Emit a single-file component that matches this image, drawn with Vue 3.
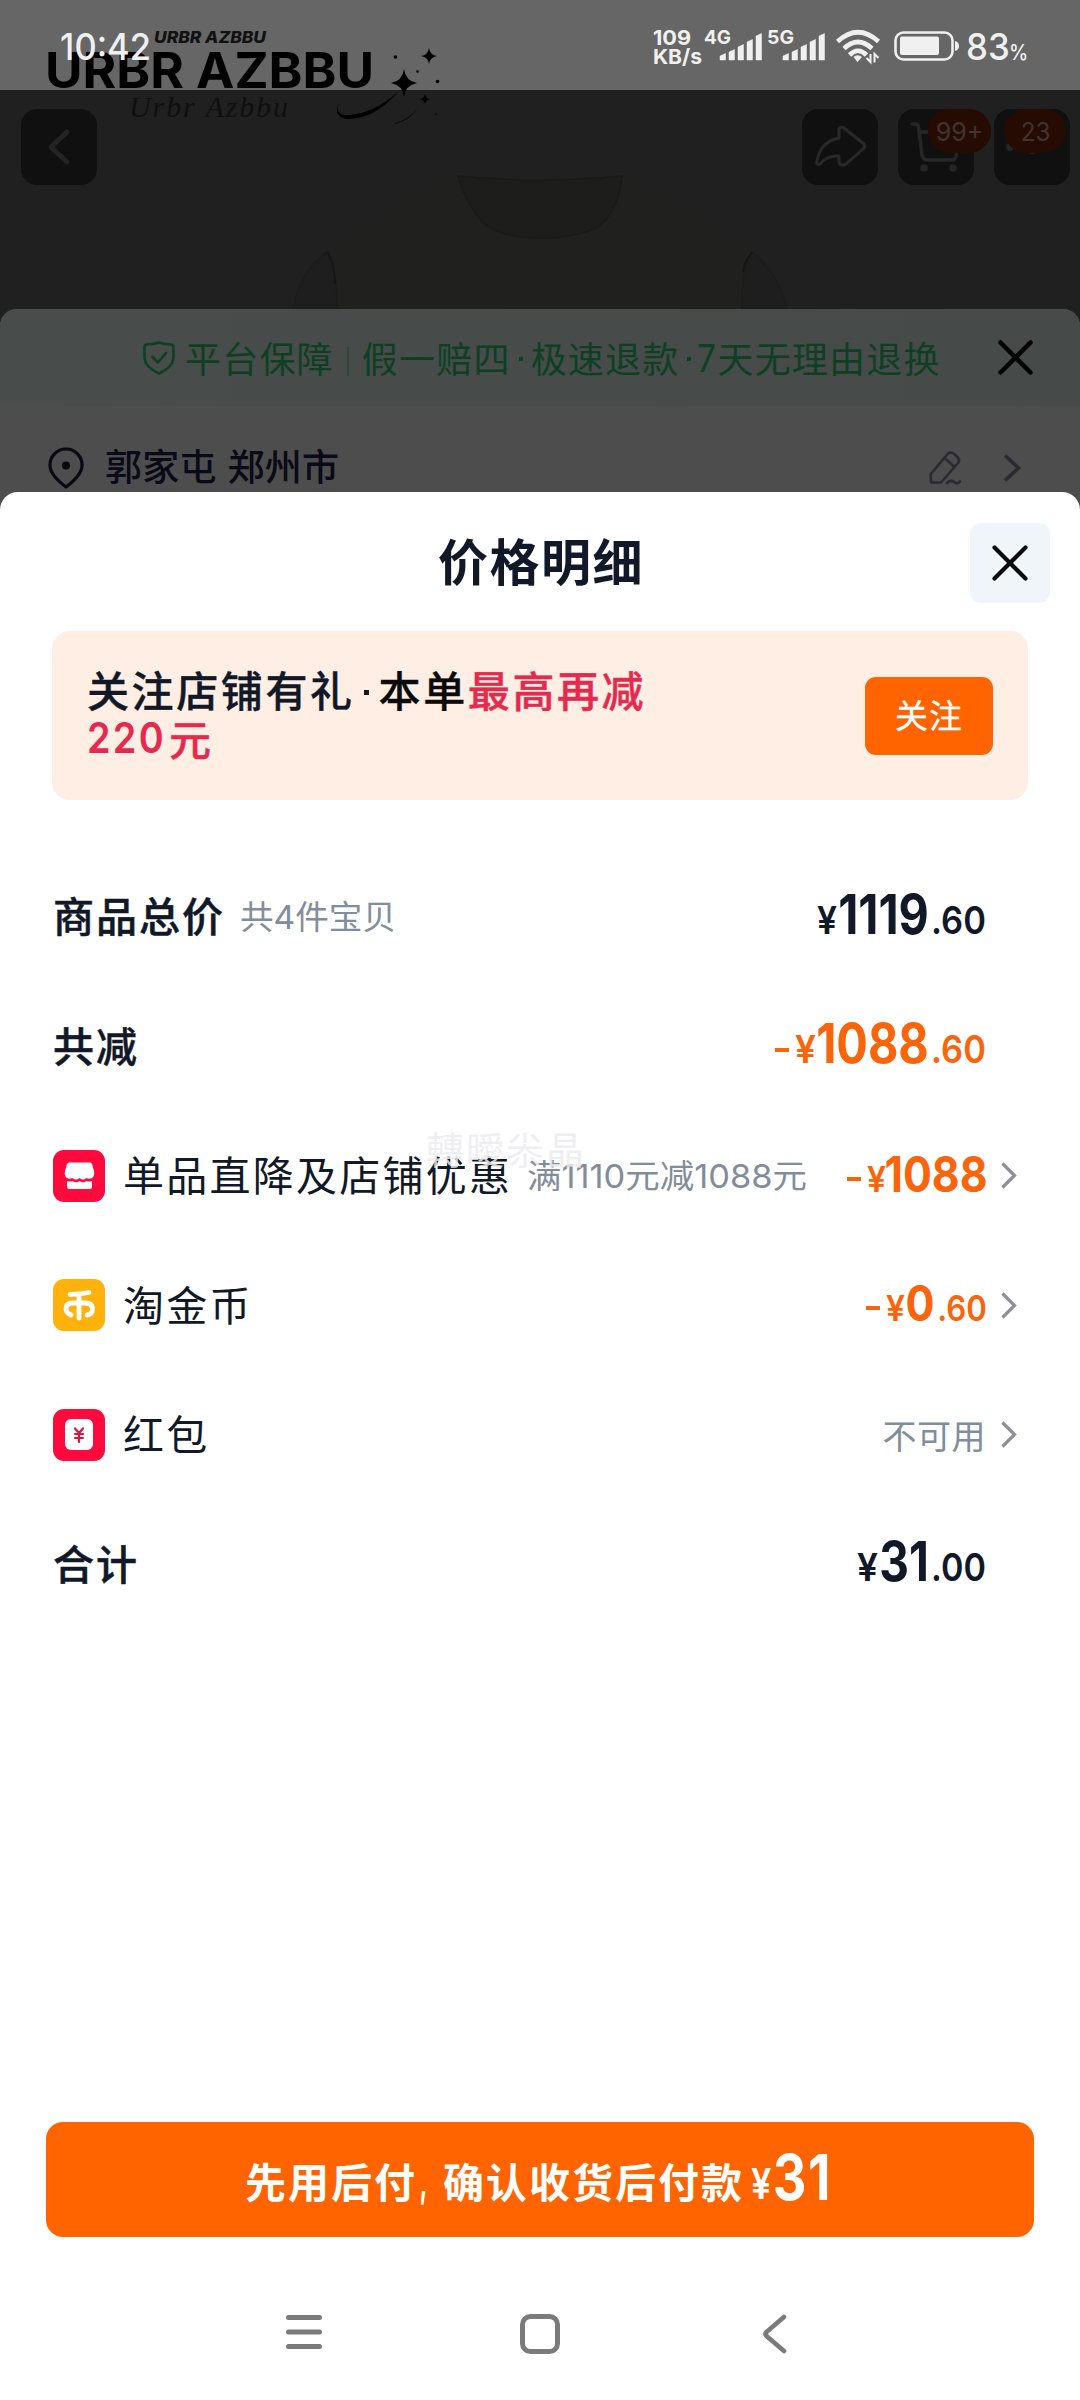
<script setup>
import { h } from 'vue'

// One run of Latin text or digits whose box is exactly as wide and as tall as its capitals.
const Run = (p) => {
  const b = p.b ?? p.h * 0.07
  return h('svg', { width: p.w, height: p.h, class: 'run' }, [
    h('text', {
      x: -b,
      y: p.h,
      'font-size': p.h / 0.727,
      'font-weight': p.fw || 700,
      'font-family': 'Inter, "Noto Sans CJK SC", sans-serif',
      fill: 'currentColor',
      textLength: p.w + 2 * b,
      lengthAdjust: 'spacingAndGlyphs',
    }, p.t),
  ])
}
Run.props = ['t', 'w', 'h', 'fw', 'b']

const rows = [
  { label: '商品总价', bold: true, sub: { t: '共4件宝贝', w: 154 }, tone: 'dark', yen: 18, int: ['1119', 85, 40], gap: 5, dec: ['.60', 51, 28] },
  { label: '共减', bold: true, tone: 'hot', minus: true, yen: 19, int: ['1088', 107, 40], gap: 4, dec: ['.60', 51, 28] },
  { label: '单品直降及店铺优惠', icon: 'shop', sub: { t: '满1110元减1088元', w: 278 }, tone: 'hot', minus: true, yen: 17, yh: 26, int: ['1088', 98, 36], gap: 2, arrow: true },
  { label: '淘金币', icon: 'coin', tone: 'hot', minus: true, yen: 17, yh: 26, int: ['0', 24, 36], gap: 4, dec: ['.60', 46, 26], arrow: true },
  { label: '红包', icon: 'packet', note: '不可用', arrow: true },
  { label: '合计', bold: true, tone: 'dark', yen: 19, int: ['31', 44, 40], gap: 5, dec: ['.00', 51, 28] },
]
const bars = [6, 10, 15, 20, 26]
</script>

<template>
  <div class="screen">
    <section class="hero">
      <svg class="art" width="1080" height="309" viewBox="0 0 1080 309">
        <rect width="1080" height="309" fill="#202020" />
        <rect width="1080" height="90" fill="#666" />
        <path d="M458 176Q400 205 328 252Q338 280 337 309H742Q741 270 752 252Q690 212 622 176Z" fill="#20201f" />
        <g fill="#1d1d1c" stroke="#1a1a1a" stroke-width="1.500">
          <path d="M458 176Q540 184 622 176Q620 206 601 225Q580 238 540 238Q500 238 482 222Q464 200 458 176Z" />
          <path d="M293 309Q300 270 328 252Q338 280 337 309Z" fill="#1e1e1e" stroke="#1c1c1c" />
          <path d="M787 309Q778 272 752 252Q741 270 742 309Z" fill="#1e1e1e" stroke="#1c1c1c" />
          <path d="M328 252L331 260Q335 270 335 284M752 252Q743 264 743 272" fill="none" stroke="#151515" stroke-width="1.600" />
        </g>
        <g fill="#000">
          <text x="154" y="43" font-family="Inter" font-size="16.5" font-weight="800" font-style="italic" textLength="112" lengthAdjust="spacingAndGlyphs" fill="#111">URBR AZBBU</text>
          <text x="45" y="88" font-family="Inter" font-size="49.5" font-weight="700" textLength="329" lengthAdjust="spacingAndGlyphs">URBR AZBBU</text>
          <text x="129" y="117" font-family="Liberation Serif" font-size="30" font-style="italic" textLength="159" lengthAdjust="spacing" fill="#0f0f0f">Urbr Azbbu</text>
          <path d="M404 69Q405.500 81 417 83Q405.500 85 404 97Q402.500 85 391 83Q402.500 81 404 69Z" />
          <path d="M429 48Q430 55 437 56Q430 57 429 64Q428 57 421 56Q428 55 429 48Z" />
          <path d="M425 94Q426 98.500 430 99Q426 100 425 104Q424 100 420 99Q424 98.500 425 94Z" />
          <circle cx="395.500" cy="57" r="1.800" /><circle cx="417.500" cy="71.500" r="1.300" /><circle cx="437.500" cy="81.500" r="1.800" /><circle cx="436" cy="114" r="1.200" fill="#111" />
          <path d="M340 101Q334 114 345 115Q372 115 398 92Q374 120 346 119Q332 116 340 101Z" />
          <path d="M395 123Q408 120 418 108Q409 121 395 124Z" fill="#0a0a0a" />
        </g>
      </svg>

      <div class="status">
        <Run class="clock" t="10:42" :w="87" :h="27" :fw="500" />
        <div class="rate">
          <Run t="109" :w="36" :h="15" :fw="700" /><Run t="KB/s" :w="47" :h="15" :fw="700" />
        </div>
        <div v-for="g in ['4G', '5G']" :key="g" class="cell">
          <Run :t="g" :w="25" :h="14" :fw="700" />
          <svg width="42" height="27" viewBox="0 0 42 27" class="bars">
            <path v-for="(b, i) in bars" :key="b" :d="`M${i * 9} 27V${29 - b}l5.500 -2.500V27Z`" fill="#f0f0f0" stroke="#f0f0f0" stroke-width=".5" />
          </svg>
        </div>
        <svg class="wifi" width="44" height="33" viewBox="0 0 44 33" fill="none" stroke="#f0f0f0" stroke-width="4.600">
          <path d="M1.500 11.500Q22-7 42.500 11.500" /><path d="M8 18.500Q22 5.500 36 18.500" /><path d="M13.500 25Q22 16.500 30.500 25" />
          <path d="M21.500 32l-4-5Q21.500 23.500 26 27Z" fill="#f0f0f0" stroke="none" />
          <path d="M34.500 24v8l-4-4M38.500 32.500v-8.500l4 4" stroke-width="2" />
        </svg>
        <svg class="batt" width="66" height="30" viewBox="0 0 66 30">
          <rect x="1.500" y="1.500" width="57" height="27" rx="8" fill="none" stroke="#f0f0f0" stroke-width="2.600" />
          <rect x="6" y="5.500" width="39" height="18.500" rx="2" fill="#f0f0f0" />
          <path d="M61 10q4 1 4 5t-4 5Z" fill="#f0f0f0" />
        </svg>
        <div class="pct"><Run t="83" :w="40" :h="27" :fw="500" /><Run t="%" :w="17" :h="16" :fw="500" /></div>
      </div>

      <nav class="tools">
        <div class="tool">
          <svg width="76" height="76" viewBox="0 0 76 76" fill="none" stroke="#242424" stroke-width="5" stroke-linecap="round" stroke-linejoin="round"><path d="M46 23L30 38L46 53" /></svg>
        </div>
        <div class="tool push">
          <svg width="76" height="76" viewBox="0 0 76 76" fill="none" stroke="#292929" stroke-width="3" stroke-linejoin="round"><path d="M37 21Q37 17 42 19L62 35Q64 38 61 40L44 55Q38 58 37 53V47Q25 46 18 55Q14 57 15 52Q18 33 37 29Z" /></svg>
        </div>
        <div class="tool">
          <svg width="76" height="76" viewBox="0 0 76 76" fill="none" stroke="#262626" stroke-width="3.500" stroke-linecap="round" stroke-linejoin="round"><path d="M14 15H18Q20 15 20.500 18L24 46Q25 51 29 51H53Q57 51 58 48L61 23H22" /><circle cx="26" cy="59" r="2" fill="#262626" /><circle cx="55" cy="59" r="2" fill="#262626" /></svg>
          <span class="badge"><Run t="99+" :w="45" :h="19" :fw="400" /></span>
        </div>
        <div class="tool">
          <svg width="76" height="76" viewBox="0 0 76 76" fill="#262626"><circle cx="16" cy="38" r="4" /><circle cx="38" cy="40" r="5" /></svg>
          <span class="badge two"><Run t="23" :w="27" :h="19" :fw="400" /></span>
        </div>
      </nav>
    </section>

    <section class="under">
      <div class="guard">
        <svg width="32" height="34" viewBox="0 0 32 34" fill="none" stroke="#0d4022" stroke-width="2.600" stroke-linecap="round" stroke-linejoin="round"><path d="M16 1.500Q22 3.500 28 3.500Q30.500 3.500 30.500 6V17Q30 26 16 32.500Q2 26 1.500 17V6Q1.500 3.500 4 3.500Q10 3.500 16 1.500Z" /><path d="M9.500 16L15 21.500L23 12" /></svg>
        <span class="g1">平台保障</span>
        <i class="bar"></i>
        <span class="g2">假一赔四</span><b class="dot"></b><span class="g2">极速退款</span><b class="dot"></b><Run class="seven" t="7" :w="16" :h="28" :fw="400" /><span class="g2">天无理由退换</span>
        <svg class="x1" width="35" height="35" viewBox="0 0 35 35" stroke="#000" stroke-width="4.500" stroke-linecap="round"><path d="M2.500 2.500L32.500 32.500M32.500 2.500L2.500 32.500" /></svg>
      </div>
      <div class="addr">
        <svg width="36" height="42" viewBox="0 0 36 42" fill="none" stroke="#090912" stroke-width="3.200" stroke-linejoin="round"><path d="M18 2A16 16 0 0 1 34 18.500Q34 28 18 40Q2 28 2 18.500A16 16 0 0 1 18 2Z" /><circle cx="18" cy="18.500" r="4" fill="#090912" stroke="none" /></svg>
        <span>郭家屯</span><span class="city">郑州市</span>
        <svg class="edit" width="32" height="34" viewBox="0 0 32 34" fill="none" stroke="#2a2a30" stroke-width="2.600" stroke-linecap="round" stroke-linejoin="round"><path d="M2 31.500L1.500 23.500L18.500 3Q21.500 0 25 3L28 5.500Q31.500 9 29 12L12 31.500Z" /><path d="M15.500 7L25.500 16M18 32Q22 28.500 25 31T31 30.500" /></svg>
        <svg width="18" height="28" viewBox="0 0 18 28" fill="none" stroke="#2a2a30" stroke-width="3.600"><path d="M2 1.500L15.500 14L2 26.500" /></svg>
      </div>
    </section>

    <main class="sheet">
      <header>
        <h1>价格明细</h1>
        <button class="close"><svg width="36" height="36" viewBox="0 0 36 36" stroke="#0b0b0b" stroke-width="4.200" stroke-linecap="round"><path d="M2.500 2.500L33.500 33.500M33.500 2.500L2.500 33.500" /></svg></button>
      </header>

      <div class="promo">
        <p><span>关注店铺有礼</span><b class="dot big"></b><span class="blk">本单</span><em>最高再减</em><br><em class="l2"><Run t="220" :w="77" :h="31" :b="1" :fw="600" /><span>元</span></em></p>
        <button>关注</button>
      </div>

      <ul>
        <li v-for="r in rows" :key="r.label">
          <svg v-if="r.icon" class="ico" width="52" height="52" viewBox="0 0 52 52">
            <rect width="52" height="52" rx="11" :fill="r.icon === 'coin' ? '#ffb20b' : '#ff0a3c'" />
            <template v-if="r.icon === 'shop'">
              <path d="M16 12.500H37Q38.500 12.500 39 14L41 21Q42 27 38 28.500Q35 29 33.500 28Q30 31 26.500 28Q23 31 19.500 28Q17 29 15 28.500Q11 27 12 21L14 14Q14.500 12.500 16 12.500Z" fill="#fff" />
              <path d="M14 31Q17 32 19.500 31Q23 33.500 26.500 31Q30 33.500 33.500 31Q36 32 39 31V37Q39 39 37 39H16Q14 39 14 37Z" fill="#fff" />
            </template>
            <g v-else-if="r.icon === 'coin'" fill="none" stroke="#fff" stroke-width="4.800" stroke-linecap="round">
              <path d="M17 15.500Q28 15 36 13.500M26 15.500V39M18 36Q13 33.500 13 30Q13 24 20 24H32Q39.500 24 39.500 30Q39.500 35.500 34 36" />
            </g>
            <template v-else>
              <rect x="12" y="10" width="28" height="31" rx="6" fill="#fff" />
              <path d="M22 19.500L26 24L30 19.500M26 24V33M22 25H30M22 29H30" fill="none" stroke="#e0123c" stroke-width="2.200" stroke-linecap="round" />
            </template>
          </svg>
          <span class="label" :class="{ bold: r.bold }">{{ r.label }}</span>
          <Run v-if="r.sub" class="sub" :t="r.sub.t" :w="r.sub.w" :h="24" :b="1" :fw="400" />
          <span class="space"></span>
          <div v-if="r.int" class="price" :class="[r.tone, { small: r.arrow }]">
            <i v-if="r.minus" class="minus"></i>
            <Run t="¥" :w="r.yen" :h="r.yh || 28" :b="1" :fw="600" />
            <Run :style="{ marginLeft: r.gap + 'px' }" :t="r.int[0]" :w="r.int[1]" :h="r.int[2]" />
            <Run v-if="r.dec" class="dec" :t="r.dec[0]" :w="r.dec[1]" :h="r.dec[2]" :fw="600" />
          </div>
          <span v-if="r.note" class="note">{{ r.note }}</span>
          <svg v-if="r.arrow" class="go" width="16" height="27" viewBox="0 0 16 27" fill="none" stroke="#8f8f98" stroke-width="3.200"><path d="M1.500 1.500L13.500 13.500L1.500 25.500" /></svg>
        </li>
      </ul>
      <div class="mark">轉曖尜晶</div>

      <button class="pay">
        <span class="p1">先用后付</span><Run class="comma" t="," :w="8" :h="32" :b="0" :fw="800" /><span>确认收货后付款</span>
        <Run class="py" t="¥" :w="20" :h="31" :b="1" :fw="600" /><Run class="pn" t="31" :w="53" :h="46" :fw="700" />
      </button>

      <footer>
        <svg width="36" height="36" viewBox="0 0 36 36" stroke="#7b7b7b" stroke-width="5" stroke-linecap="round"><path d="M2.500 3.500H33.500M2.500 18H33.500M2.500 32.500H33.500" /></svg>
        <svg width="40" height="40" viewBox="0 0 40 40"><rect x="2.500" y="2.500" width="35" height="35" rx="8" fill="none" stroke="#7b7b7b" stroke-width="5" /></svg>
        <svg width="25" height="40" viewBox="0 0 25 40" fill="none" stroke="#7b7b7b" stroke-width="4.600" stroke-linecap="round" stroke-linejoin="round"><path d="M22 3L4.500 18Q2.500 20 4.500 22L22 37" /></svg>
      </footer>
    </main>
  </div>
</template>

<style>
html, body { margin: 0; background: #fff; }
</style>

<style scoped>
.screen { width: 1080px; height: 2400px; overflow: hidden; background: #202020; font-family: "Noto Sans CJK SC", sans-serif; color: #111827; }
svg { display: block; flex: none; overflow: visible; }
button { border: 0; padding: 0; font: inherit; display: flex; align-items: center; justify-content: center; }
span { white-space: nowrap; }
.hero { position: relative; height: 309px; }
.art { position: absolute; left: 0; top: 0; overflow: hidden; }
.status { position: relative; height: 90px; display: flex; align-items: flex-start; color: #f0f0f0; }
.clock { margin: 33px 0 0 62px; }
.rate { margin: 30px 0 0 505px; width: 51px; display: flex; flex-direction: column; gap: 4px; }
.cell { position: relative; width: 63px; margin-top: 30px; }
.bars { position: absolute; left: 15px; top: 3px; }
.wifi { margin: 30px 0 0 5px; }
.batt { margin: 31px 0 0 14px; }
.pct { display: flex; align-items: flex-end; gap: 2px; margin: 33px 0 0 8px; }
.tools { position: relative; display: flex; padding: 19px 10px 0 21px; gap: 20px; }
.tool { position: relative; width: 76px; height: 76px; border-radius: 16px; background: #101010; }
.push { margin-left: auto; }
.badge { position: absolute; left: 30px; top: 0; width: 63px; height: 44px; border-radius: 22px; background: #260b02; color: #3f3430; display: flex; align-items: center; justify-content: center; }
.two { left: 10px; width: 62px; }
.under { height: 183px; margin-bottom: -20px; padding-bottom: 20px; border-radius: 17px 17px 0 0; background: #4d4d4d; overflow: hidden; }
.guard { height: 97px; background: linear-gradient(90deg, #484c4a, #464b4a); display: flex; align-items: center; padding-left: 143px; font-size: 36px; letter-spacing: 1.2px; color: #0d4022; }
.guard span { padding-bottom: 2px; }
.g1 { margin-left: 10px; }
.bar { width: 2px; height: 29px; background: #2b4635; margin: 8px 13px 0 13px; }
.dot { width: 4px; height: 4px; background: currentColor; margin: 2px 8px 0 8px; }
.seven { margin: 0 2px 0 0; }
.x1 { margin-left: auto; margin-right: 47px; }
.addr { display: flex; align-items: center; height: 122px; margin-top: 1px; padding-left: 48px; font-size: 37px; letter-spacing: .2px; color: #0a0a16; font-weight: 500; }
.addr span { margin-left: 21px; padding-bottom: 6px; }
.addr .city { margin-left: 11px; }
.edit { margin: 0 42px 0 auto; }
.addr svg:last-child { margin-right: 59px; }
.sheet { position: relative; height: 1908px; background: #fff; border-radius: 18px 18px 0 0; display: flex; flex-direction: column; }
header { height: 139px; display: flex; align-items: center; justify-content: center; }
h1 { margin: 0 0 5px 253px; flex: 1; text-align: center; font-size: 50px; line-height: 60px; font-weight: 700; letter-spacing: 1.5px; }
.close { width: 80px; height: 80px; margin: 3px 30px 0 141px; border-radius: 11px; background: #f0f5f9; }
.promo { box-sizing: border-box; width: 976px; height: 169px; margin-left: 52px; border-radius: 18px; background: #ffeee4; display: flex; align-items: center; justify-content: space-between; padding: 0 35px; }
.promo p { margin: 0 0 5px; font-size: 42px; line-height: 49px; letter-spacing: 2.600px; font-weight: 500; white-space: nowrap; -webkit-text-stroke: .4px currentColor; }
.promo em { font-style: normal; color: #e6294c; }
.blk { color: #0b0b0b; }
.big { display: inline-block; width: 5px; height: 5px; margin: 0 10px 12px 9px; }
.l2 { display: flex; align-items: center; padding-left: 1px; }
.l2 span { margin-left: 4px; }
.promo button { width: 128px; height: 78px; border-radius: 11px; background: #ff6400; color: #fff; font-size: 33px; letter-spacing: 1px; padding-bottom: 3px; box-sizing: border-box; -webkit-text-stroke: .3px #fff; }
ul { list-style: none; margin: 52px 0 0; padding: 0 0 0 52px; }
li { height: 129.5px; display: flex; align-items: center; }
.ico { margin: 0 18px 0 1px; }
.label { font-size: 41px; letter-spacing: 2.250px; padding-bottom: 5px; }
.bold { font-weight: 500; margin-left: 1px; letter-spacing: 2px; -webkit-text-stroke: .5px currentColor; }
.sub { color: #828d9b; margin: 0 0 0 16px; }
.space { flex: 1; }
.price { display: flex; align-items: flex-end; margin: 0 96px 6px 0; }
.small { margin: 0 16px 4px 0; }
.dark { color: #111827; }
.hot { color: #fa650c; }
.minus { width: 14px; height: 4px; background: currentColor; margin: 0 7px 11px 0; }
.dec { margin-left: 7px; }
.note { font-size: 34px; letter-spacing: .5px; color: #828d9b; margin-right: 15px; padding-bottom: 1px; }
.go { margin-right: 63px; }
.mark { position: absolute; left: 426px; top: 628px; font-size: 38px; letter-spacing: 2px; color: rgba(236, 236, 238, .85); line-height: 56px; }
.pay { box-sizing: border-box; width: 988px; height: 115px; margin: auto 0 0 46px; border-radius: 17px; background: #ff6400; color: #fff; font-size: 41px; letter-spacing: 2px; font-weight: 700; justify-content: flex-start; padding-left: 199px; }
.pay span { padding-bottom: 0; }
.comma { margin: 0 15px 0 3px; }
.py { margin: 8px 4px 0 8px; }
.pn { margin-top: -6px; }
footer { height: 163px; display: flex; align-items: flex-start; padding: 77px 293px 0 286px; box-sizing: border-box; }
footer svg:nth-child(2) { margin: 0 auto 0 198px; }
</style>
